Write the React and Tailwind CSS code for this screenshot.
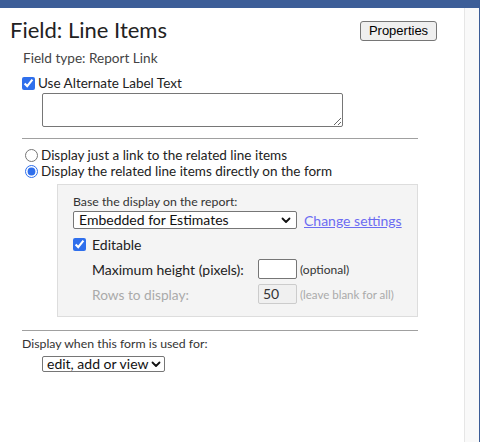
import React from "react";

function Chevron({ className }) {
  return (
    <svg className={className} width="10" height="7" viewBox="0 0 10 7" fill="none">
      <path d="M1.5 1.5 L5 5 L8.5 1.5" stroke="#111" strokeWidth="1.8" strokeLinecap="round" strokeLinejoin="round" />
    </svg>
  );
}

export default function App() {
  return (
    <div className="w-[492px] h-[442px] bg-white overflow-hidden font-['Lato','Noto_Sans',sans-serif] text-[#222]">
      <div className="w-[480px] h-full border-r border-[#3b5c96] flex flex-col">
        <div className="h-[8px] bg-[#3d5e98] shrink-0" />
        <div className="flex flex-1">
          <div className="w-[464px] shrink-0">
            <div className="flex items-start mt-[7px]">
              <h1 className="pl-[10px] mt-[1px] text-[22px] leading-[28px] text-[#222] font-normal">Field: Line Items</h1>
              <button className="ml-auto mr-[27px] mt-[6px] w-[77px] h-[20px] rounded-[3px] border border-[#767676] bg-[#efefef] text-[13px] leading-[18px] text-black font-['Liberation_Sans',Arial,sans-serif]">
                Properties
              </button>
            </div>
            <div className="pl-[22px]">
              <div className="mt-[6px] text-[13.6px] leading-[16px] text-[#444] pl-[1px]">Field type: Report Link</div>
              <label className="mt-[9px] flex items-center text-[13.5px] leading-[17px]">
                <input type="checkbox" defaultChecked className="m-0 w-[13px] h-[13px] accent-[#2f6fec]" />
                <span className="ml-[3px]">Use Alternate Label Text</span>
              </label>
              <textarea className="block mt-[1px] ml-[20px] w-[301px] h-[34px] border border-[#767676] rounded-[2px] bg-white" />
              <div className="mt-[11px] w-[396px] h-px bg-[#a0a0a0]" />
              <div className="mt-[8px] text-[13.5px] leading-[16px]">
                <label className="flex items-center">
                  <input type="radio" name="disp" className="m-0 ml-[3px] w-[13px] h-[13px] accent-[#2f6fec]" />
                  <span className="ml-[3px]">Display just a link to the related line items</span>
                </label>
                <label className="flex items-center">
                  <input type="radio" name="disp" defaultChecked className="m-0 ml-[3px] w-[13px] h-[13px] accent-[#2f6fec]" />
                  <span className="ml-[3px]">Display the related line items directly on the form</span>
                </label>
              </div>
              <div className="mt-[5px] ml-[35px] w-[361px] bg-[#f4f4f4] border border-[#dddddd] pl-[15px] pt-[9px] pb-[12px]">
                <div className="text-[12.3px] leading-[16px] text-[#333]">Base the display on the report:</div>
                <div className="mt-[1px] flex items-center">
                  <div className="w-[224px] h-[18px] border border-[#767676] rounded-[2px] bg-white flex items-center pl-[5px] pr-[5px] text-[14px] leading-[16px] text-[#111]">
                    <span>Embedded for Estimates</span>
                    <Chevron className="ml-auto" />
                  </div>
                  <a href="#" className="ml-[7px] text-[14px] leading-[17px] text-[#6c6cf2] underline">Change settings</a>
                </div>
                <label className="mt-[7px] flex items-center text-[14px] leading-[17px]">
                  <input type="checkbox" defaultChecked className="m-0 w-[13px] h-[13px] accent-[#2f6fec]" />
                  <span className="ml-[6px]">Editable</span>
                </label>
                <div className="mt-[6px] flex items-center">
                  <span className="ml-[19px] w-[166px] text-[14px] leading-[17px]">Maximum height (pixels):</span>
                  <div className="w-[39px] h-[20px] border border-[#767676] rounded-[2px] bg-white" />
                  <span className="ml-[3px] text-[12px] leading-[15px] text-[#333]">(optional)</span>
                </div>
                <div className="mt-[5px] flex items-center">
                  <span className="ml-[19px] w-[166px] text-[13.7px] leading-[17px] text-[#aaaaaa]">Rows to display:</span>
                  <div className="w-[39px] h-[20px] border border-[#cccccc] rounded-[2px] bg-[#f0f0f0] pl-[4px] text-[14px] leading-[18px] text-[#333]">50</div>
                  <span className="ml-[3px] text-[11.5px] leading-[15px] text-[#aaaaaa]">(leave blank for all)</span>
                </div>
              </div>
              <div className="mt-[13px] w-[396px] h-px bg-[#a0a0a0]" />
              <div className="mt-[5px] text-[12.3px] leading-[16px] text-[#333]">Display when this form is used for:</div>
              <div className="mt-[4px] ml-[20px] w-[123px] h-[16px] border border-[#767676] rounded-[2px] bg-white flex items-center pl-[4px] pr-[3px] text-[14px] leading-[14px] text-[#111]">
                <span>edit, add or view</span>
                <Chevron className="ml-auto" />
              </div>
            </div>
          </div>
          <div className="flex-1 bg-[#f9f9f9] border-l border-[#e6e6e6]" />
        </div>
      </div>
    </div>
  );
}
